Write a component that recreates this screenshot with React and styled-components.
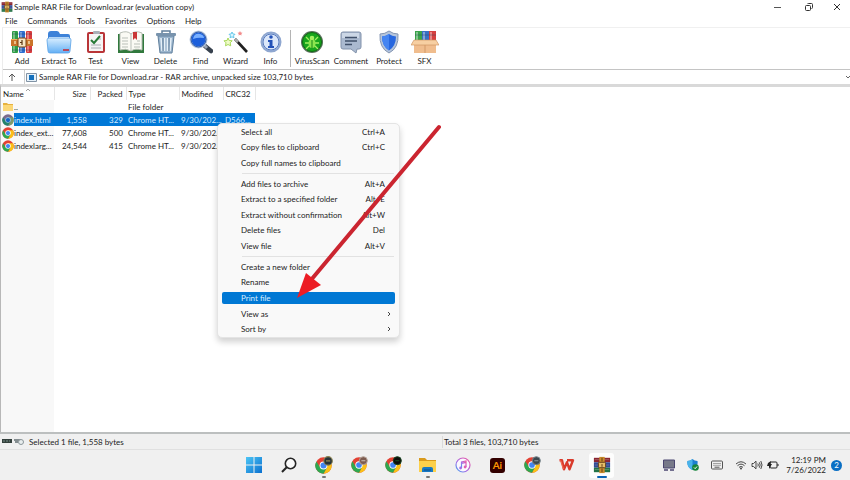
import React from "react";
import styled, { createGlobalStyle, css } from "styled-components";

const GlobalStyle = createGlobalStyle`
  * {
    box-sizing: border-box;
  }
  body {
    margin: 0;
    overflow: hidden;
  }
  body, button, select, table {
    font-family: Lato, "Open Sans", sans-serif;
    font-size: 8px;
    line-height: 12px;
    color: #1c1c1c;
  }
  button, select {
    border: 0;
    margin: 0;
    padding: 0;
    background: none;
  }
  svg {
    display: block;
    flex: none;
  }
`;

const Screen = styled.div`
  display: flex;
  flex-direction: column;
  min-height: 100vh;
  background: #fff;
`;

const TitleBar = styled.header`
  display: flex;
  align-items: center;
  height: 14px;
  padding-left: 1px;
`;

const Title = styled.h1`
  flex: 1;
  margin: 0 0 0 1px;
  font-size: 8px;
  font-weight: 400;
`;

const WindowButton = styled.button`
  display: flex;
  align-items: center;
  justify-content: center;
  width: 31px;
  height: 14px;
  &:last-child {
    width: 26px;
  }
`;

const MenuBar = styled.nav`
  display: flex;
  align-items: center;
  gap: 10px;
  height: 13px;
  padding-left: 5px;
`;

const ToolArea = styled.div`
  margin-left: 2px;
  border-top: 1px solid #f0f0f0;
  border-left: 1px solid #ececec;
`;

const ToolBar = styled.div`
  display: flex;
  height: 42px;
  padding-left: 1px;
  border-bottom: 1px solid #c4c4c4;
`;

const ToolButton = styled.button`
  display: flex;
  flex-direction: column;
  align-items: center;
  gap: 1px;
  width: ${(props) => props.$width || 35}px;
  padding-top: 2px;
  white-space: nowrap;
`;

const ToolDivider = styled.div`
  width: 1px;
  height: 37px;
  margin: 2px 2px 0;
  background: #b4b4b4;
`;

const AddressBar = styled.div`
  display: flex;
  align-items: center;
  height: 14px;
`;

const UpButton = styled.button`
  display: flex;
  align-items: center;
  justify-content: center;
  width: 18px;
  height: 14px;
`;

const AddressField = styled.label`
  display: flex;
  flex: 1;
  align-items: center;
  gap: 2px;
  height: 14px;
  margin-left: 3px;
  padding-left: 1px;
  border-left: 1px solid #cfcfcf;
`;

const AddressSelect = styled.select`
  flex: 1;
  appearance: none;
  height: 12px;
`;

const FileArea = styled.main`
  position: relative;
  flex: 1;
  border-top: 3px solid #d9d9d9;
  border-left: 1px solid #b8b8b8;
  background: linear-gradient(to right, #f8f8f8 53px, #fff 53px);
`;

const FileTable = styled.table`
  table-layout: fixed;
  width: 254px;
  border-collapse: collapse;
`;

const Col = styled.col`
  width: ${(props) => props.$width}px;
`;

const cell = css`
  padding: 0 3px 0 2px;
  font-weight: 400;
  text-align: ${(props) => (props.$right ? "right" : "left")};
  white-space: nowrap;
`;

const HeadCell = styled.th`
  ${cell}
  height: 13px;
  border-right: 1px solid #e6e6e6;
  background: #fff;
`;

const NameHead = styled.span`
  display: flex;
  align-items: flex-start;
  gap: 1px;
`;

const FileRow = styled.tr`
  color: ${(props) => (props.$selected ? "#d8ecff" : "inherit")};
  td {
    background: ${(props) => (props.$selected ? "#0078d7" : "transparent")};
  }
  td:first-child {
    padding: 0 0 0 1px;
    background: ${(props) =>
      props.$selected
        ? "linear-gradient(to right, #f8f8f8 13px, #0078d7 13px)"
        : "transparent"};
  }
`;

const Cell = styled.td`
  ${cell}
  height: 13px;
`;

const FileName = styled.span`
  display: flex;
  align-items: center;
`;

const ContextMenu = styled.div`
  position: absolute;
  top: 36px;
  left: 216px;
  display: grid;
  grid-template-rows:
    repeat(3, minmax(0, 1fr)) 5px
    repeat(5, minmax(0, 1fr)) 5px
    repeat(5, minmax(0, 1fr));
  width: 183px;
  height: 215px;
  padding: 0 4px;
  border: 1px solid #e4e4e4;
  border-radius: 5px;
  background: #f9f9f9;
  box-shadow: 0 4px 6px rgba(0, 0, 0, 0.18);
`;

const ContextItem = styled.button`
  display: flex;
  align-items: center;
  justify-content: space-between;
  padding: 0 ${(props) => (props.$submenu ? 4 : 10)}px 0 19px;
  border-radius: 2px;
  ${(props) =>
    props.$active &&
    css`
      margin: 2px 0;
      background: #0078d4;
      color: #d8ecff;
    `}
`;

const ContextDivider = styled.hr`
  width: 152px;
  height: 1px;
  margin: 2px 0 2px 20px;
  border: 0;
  background: #e2e2e2;
`;

const Arrow = styled.svg`
  position: absolute;
  top: 36px;
  left: 290px;
  pointer-events: none;
`;

const StatusBar = styled.footer`
  display: flex;
  align-items: center;
  height: 18px;
  border-top: 2px solid #bcbfbf;
  border-bottom: 1px solid #e0e0e0;
  background: #f0f0f0;
`;

const StatusCell = styled.div`
  display: flex;
  flex: ${(props) => props.$grow || 0} 1 0;
  align-items: center;
  gap: 4px;
  padding-left: 2px;
  & + & {
    padding-left: 1px;
    border-left: 1px solid #dadada;
  }
`;

const TaskBar = styled.div`
  display: flex;
  align-items: center;
  justify-content: flex-end;
  height: 30px;
  background: #f0f0f0;
`;

const Apps = styled.nav`
  display: grid;
  grid-template-columns: repeat(11, 1fr);
  justify-items: center;
  width: 382px;
  margin-right: 38px;
`;

const AppButton = styled.button`
  position: relative;
  display: flex;
  align-items: center;
  justify-content: center;
  width: 25px;
  height: 25px;
  border-radius: 3px;
  background: ${(props) => (props.$active ? "#fdfdfd" : "none")};
  &::after {
    content: "";
    position: absolute;
    bottom: 0;
    width: ${(props) => (props.$active ? 10 : props.$running ? 4 : 0)}px;
    height: 2px;
    border-radius: 1px;
    background: ${(props) => (props.$active ? "#0a63b5" : "#777")};
  }
`;

const Tray = styled.div`
  display: flex;
  align-items: center;
  padding-right: 8px;
`;

const TrayGroup = styled.button`
  display: flex;
  margin-left: 4px;
`;

const TrayIcon = styled.span`
  display: flex;
  justify-content: center;
  width: ${(props) => (props.$wide ? 24 : 16)}px;
`;

const Clock = styled.time`
  width: 45px;
  line-height: 10px;
  text-align: right;
`;

const Badge = styled.span`
  width: 11px;
  height: 11px;
  margin-left: 5px;
  border-radius: 50%;
  background: #0a6fc4;
  color: #fff;
  line-height: 11px;
  text-align: center;
`;

const RarIcon = ({ size = 24 }) => (
  <svg width={size} height={size} viewBox="0 0 24 24">
    <rect x="2" y="1" width="6" height="22" rx="1" fill="#2f9e46" />
    <rect x="9" y="1" width="6" height="22" rx="1" fill="#2f6fd0" />
    <rect x="16" y="1" width="6" height="22" rx="1" fill="#d93a3c" />
    <path d="M4 2v20M11 2v20M18 2v20" stroke="#fff" strokeOpacity=".45" strokeWidth="1.5" />
    <path d="M2 4h20M2 20h20" stroke="#17335c" strokeOpacity=".35" />
    <rect x="1" y="9" width="22" height="7" fill="#c9742a" />
    <path d="M1 9.5h22" stroke="#f2ae5a" />
    <rect x="8" y="8" width="8" height="9" rx="1" fill="#f6e6c4" stroke="#7a4313" />
    <path d="M12 10v5M10 12.5h2" stroke="#5b3512" strokeWidth="1.2" />
    <path d="M5 11v3M19 11v3" stroke="#fff3c9" strokeWidth="1.2" />
  </svg>
);

const BooksIcon = ({ size = 20 }) => (
  <svg width={size} height={size} viewBox="0 0 20 20">
    <path fill="#8b2431" d="M1 2h18v5H1z" />
    <path fill="#314a97" d="M1 7h18v6H1z" />
    <path fill="#227246" d="M1 13h18v5H1z" />
    <path d="M2 4h16M2 10h16M2 15h16" stroke="#c8c1b4" strokeOpacity=".35" />
    <path fill="#c98c2c" d="M7 1h6v18H7z" />
    <rect x="6" y="7" width="8" height="6" rx="1" fill="#e5bd68" stroke="#5b3512" />
    <path d="M10 2v4M10 9v3M10 14v4" stroke="#5b3512" />
  </svg>
);

const FolderIcon = () => (
  <svg width="26" height="24" viewBox="0 0 26 24">
    <defs>
      <linearGradient id="folder" x2="0" y2="1">
        <stop stopColor="#d9eeff" />
        <stop offset="1" stopColor="#63b0f5" />
      </linearGradient>
    </defs>
    <path d="M2 4q0-3 3-3h6q2 0 3 3h8q2 0 2 2v8H2z" fill="#3d82d8" />
    <path d="M3 7h20v3H3z" fill="#eef7ff" />
    <path d="M1 10q0-2 2-2h20q2 0 2 2l-1 11q0 2-2 2H4q-2 0-2-2z" fill="url(#folder)" stroke="#5aa2e6" strokeWidth=".8" />
    <path d="M17 19h6v2h-6z" fill="#b54a60" />
  </svg>
);

const TestIcon = () => (
  <svg width="22" height="24" viewBox="0 0 22 24">
    <rect x="2" y="2" width="18" height="21" rx="2" fill="#b93538" />
    <path d="M4 4h14v17H4z" fill="#f5f5f5" />
    <rect x="8" y="1" width="7" height="3" rx="1" fill="#aab0b7" />
    <path d="M6 15h10M6 18h10M12 9h4" stroke="#a9adb3" />
    <path d="M6 10l3 3 6-7" fill="none" stroke="#287b37" strokeWidth="2" />
  </svg>
);

const BookIcon = () => (
  <svg width="28" height="24" viewBox="0 0 28 24">
    <path d="M1 4h26v19H1z" fill="#31793d" />
    <path d="M3 3q7-3 11 1 4-4 11-1v17q-7-2-11 1-5-3-11-1z" fill="#fafaf4" stroke="#b8beb5" />
    <path d="M14 4v17M5 8h6M5 11h6M5 14h6M5 17h6M17 14h6M17 17h6M20 11h3" stroke="#b9bfb8" />
    <path d="M16 2h4v8l-2-2-2 2z" fill="#c93838" />
  </svg>
);

const TrashIcon = () => (
  <svg width="22" height="24" viewBox="0 0 22 24">
    <path d="M3 6h16l-2 17H5z" fill="#9cb6ce" stroke="#607f9c" />
    <path d="M6 8l1 13M9.5 8v13M12.5 8v13M16 8l-1 13" stroke="#e6f0f8" strokeWidth="1.5" />
    <path d="M8 8v13M14 8v13" stroke="#5f7d99" />
    <rect x="1" y="3" width="20" height="3" rx="1" fill="#7893ad" />
    <path d="M7 3V1h8v2" fill="none" stroke="#607f9c" strokeWidth="1.5" />
  </svg>
);

const FindIcon = () => (
  <svg width="24" height="24" viewBox="0 0 24 24">
    <path d="M16 16l6 5" stroke="#37414e" strokeWidth="4.5" strokeLinecap="round" />
    <path d="M15 15l3 3" stroke="#9aa5b4" strokeWidth="3" />
    <circle cx="9.5" cy="9.5" r="8" fill="#1c5fdb" stroke="#bccbe0" strokeWidth="2" />
    <path d="M4 9q1-6 7-5 4 1 4 4-6-1-11 1z" fill="#79b0ff" />
    <circle cx="9.5" cy="9.5" r="7.5" fill="none" stroke="#2856a8" />
  </svg>
);

const WizardIcon = () => (
  <svg width="26" height="24" viewBox="0 0 26 24">
    <path d="M12 9l12 13" stroke="#202020" strokeWidth="2.6" />
    <path d="M12 9l3 3" stroke="#aaa" strokeWidth="2.6" />
    <path d="M5 8l1.2 2.5 3 .3-2 2 .5 3L5 14.5l-2.5 1.3.5-3-2-2 3-.3z" fill="#effbc7" stroke="#a8d85b" />
    <path d="M9 2l1 2 2 .3-1.5 1.5.5 2-2-1-2 1 .5-2L6 4.3 8 4z" fill="#d9f6ff" stroke="#66c7ea" />
    <path d="M17 1l.8 1.5 1.7.2-1.2 1.2.3 1.6-1.6-.8-1.5.8.3-1.6-1.3-1.2 1.7-.2z" fill="#f28b8b" />
  </svg>
);

const InfoIcon = () => (
  <svg width="24" height="24" viewBox="0 0 24 24">
    <circle cx="12" cy="12" r="9.5" fill="#dbe7fa" stroke="#8fa7d0" strokeWidth="2" />
    <circle cx="12" cy="12" r="8" fill="none" stroke="#5579be" />
    <circle cx="12" cy="7" r="1.8" fill="#2352b8" />
    <path d="M9 10h4.5v6H15v2H9v-2h1.5v-4H9z" fill="#2352b8" />
  </svg>
);

const VirusIcon = () => (
  <svg width="24" height="24" viewBox="0 0 24 24">
    <circle cx="12" cy="12" r="11" fill="#58705a" />
    <circle cx="12" cy="12" r="9.5" fill="#17a51c" stroke="#0c6f11" />
    <path d="M6 7l3 3M18 7l-3 3M5 13h4M19 13h-4M6 19l3-3M18 19l-3-3" stroke="#a4ef62" strokeWidth="1.3" />
    <ellipse cx="12" cy="13.5" rx="3.5" ry="4.5" fill="#8ce64e" />
    <circle cx="12" cy="8" r="2.3" fill="#a4ef62" />
    <path d="M12 10v8" stroke="#17851a" />
  </svg>
);

const CommentIcon = () => (
  <svg width="24" height="24" viewBox="0 0 24 24">
    <path d="M4 2h16q2 0 2 2v13q0 2-2 2h-2l-1 4-5-4H4q-2 0-2-2V4q0-2 2-2z" fill="#aab9cf" stroke="#8292ab" />
    <path d="M3 3h17v5H3z" fill="#ccd7e6" />
    <path d="M6 7.5h12M6 11h12M6 14.5h7" stroke="#40506a" strokeWidth="1.5" />
  </svg>
);

const ShieldIcon = () => (
  <svg width="24" height="24" viewBox="0 0 24 24">
    <path d="M12 1q4 3 9 3 1 14-9 19Q2 18 3 4q5 0 9-3z" fill="#b5c5dc" stroke="#8495b2" />
    <path d="M12 4q3 2 7 2.5Q19 16 12 20.5 5 16 5 6.500 9 6 12 4z" fill="#2767df" />
    <path d="M12 4v16.5Q5 16 5 6.500 9 6 12 4z" fill="#4585f2" />
  </svg>
);

const SfxIcon = () => (
  <svg width="28" height="24" viewBox="0 0 28 24">
    <path d="M4 1h7v11H4z" fill="#39a34a" />
    <path d="M11 1h7v11h-7z" fill="#3770c4" />
    <path d="M18 1h7v11h-7z" fill="#d64040" />
    <path d="M6 2v9M13 2v9M20 2v9" stroke="#fff" strokeOpacity=".5" strokeWidth="1.5" />
    <path d="M4 5h21" stroke="#27415c" strokeOpacity=".4" />
    <path d="M3 10h22v13H3z" fill="#f0bd8e" />
    <path d="M3 10h22l3 5H0z" fill="#f7cfa2" stroke="#c98d5a" strokeWidth=".6" />
    <path d="M14 15v8" stroke="#d39a68" />
  </svg>
);

const ChromeIcon = ({ size = 17, badge, ring, tinted }) => (
  <svg width={size} height={size} viewBox="0 0 48 48" overflow="visible">
    <circle cx="24" cy="24" r="23" fill={tinted ? "#7a6a8c" : "#e34133"} />
    <path d="M24 13h20.300A23 23 0 0 1 24 47l9.500-17.500z" fill={tinted ? "#7f9a6a" : "#fbc116"} />
    <path d="M14.500 29.500L4 12.500A23 23 0 0 0 24 47l9.500-17.500z" fill={tinted ? "#23846a" : "#2da94f"} />
    <circle cx="24" cy="24" r="11" fill={tinted ? "#9cc8ee" : "#fff"} />
    <circle cx="24" cy="24" r="8.5" fill={tinted ? "#1464c4" : "#4285f4"} />
    {badge && <circle cx="37" cy="11" r="12" fill={badge} stroke={ring} strokeWidth="3" />}
    {badge && <path d="M31 11h12" stroke={ring} strokeWidth="4" />}
  </svg>
);

const SmallFolder = () => (
  <svg width="12" height="11" viewBox="0 0 12 11">
    <path d="M1 2h4l1 1h5v7H1z" fill="#e7b23f" />
    <path d="M1 4h10v6H1z" fill="#fbd776" />
  </svg>
);

const WindowsIcon = () => (
  <svg width="16" height="16" viewBox="0 0 16 16">
    <defs>
      <linearGradient id="win" x2="1" y2="1">
        <stop stopColor="#4cc5f5" />
        <stop offset="1" stopColor="#0a70cf" />
      </linearGradient>
    </defs>
    <path d="M0 0h7.500v7.500H0zM8.500 0H16v7.500H8.500zM0 8.500h7.500V16H0zM8.500 8.500H16V16H8.500z" fill="url(#win)" />
  </svg>
);

const SearchIcon = () => (
  <svg width="16" height="16" viewBox="0 0 16 16" fill="none" stroke="#252525" strokeWidth="1.6">
    <circle cx="9.5" cy="6.5" r="5.2" fill="#fafafa" />
    <path d="M5.700 10.200L1 15" strokeWidth="2" />
  </svg>
);

const ExplorerIcon = () => (
  <svg width="17" height="16" viewBox="0 0 17 16">
    <path d="M0 1h6l2 2h9v5H0z" fill="#d99a1c" />
    <path d="M0 4h17v11H0z" fill="#fcd04b" />
    <path d="M3 15v-3q0-2 2-2h7q2 0 2 2v3z" fill="#1779c4" />
    <path d="M5 13h7" stroke="#0c4f8c" />
  </svg>
);

const MusicIcon = () => (
  <svg width="16" height="16" viewBox="0 0 16 16">
    <defs>
      <linearGradient id="music" x1="1" x2="0" y2="1">
        <stop stopColor="#f0569f" />
        <stop offset=".6" stopColor="#a46be6" />
        <stop offset="1" stopColor="#3fa9f0" />
      </linearGradient>
    </defs>
    <circle cx="8" cy="8" r="7" fill="#fbf8fe" stroke="url(#music)" strokeWidth="1.2" />
    <path d="M6.500 11V5l4.500-1v6M6.500 6.300L11 5.300" fill="none" stroke="url(#music)" strokeWidth="1.2" />
    <circle cx="5.6" cy="11" r="1.4" fill="#a46be6" />
    <circle cx="10.1" cy="10" r="1.4" fill="#e060b0" />
  </svg>
);

const AiTile = styled.span`
  width: 15px;
  height: 15px;
  border-radius: 3px;
  background: #330000;
  color: #ff9a00;
  font-size: 10px;
  font-weight: 700;
  line-height: 14px;
  text-align: center;
`;

const WpsIcon = () => (
  <svg width="17" height="14" viewBox="0 0 17 14" fill="none" strokeWidth="2.4" strokeLinejoin="round">
    <path d="M1.500 2.300H4l2 9 3-7 2.500 7 3.500-9H9" stroke="#d93a2b" />
    <path d="M2.500 2.300l3 9" stroke="#f0654c" strokeWidth="1.2" />
  </svg>
);

const DesktopIcon = () => (
  <svg width="12" height="12" viewBox="0 0 12 12">
    <path d="M.5 1h11v8H.5z" fill="#777989" stroke="#4b4670" />
    <path d="M1 11h4M7 11h4" stroke="#4b4670" strokeWidth="1.5" />
  </svg>
);

const DefenderIcon = () => (
  <svg width="12" height="12" viewBox="0 0 12 12">
    <path d="M5.500 0q2 2 5 2 1 6-5 9-6-3-5-9 3 0 5-2z" fill="#1c7fd0" />
    <path d="M5.500 0v11q-6-3-5-9 3 0 5-2z" fill="#49b3ea" />
    <circle cx="8.5" cy="8.5" r="3.3" fill="#16853a" />
    <path d="M7 8.500l1.200 1.200L10 7.500" stroke="#fff" fill="none" />
  </svg>
);

const KeyboardIcon = () => (
  <svg width="12" height="10" viewBox="0 0 12 10" fill="none" stroke="#555">
    <rect x=".5" y="1" width="11" height="8" rx="1" />
    <path d="M2.500 3.500h7M2.500 5.300h7" strokeDasharray="1 1" />
    <path d="M3.500 7.200h5" />
  </svg>
);

const WifiIcon = () => (
  <svg width="12" height="10" viewBox="0 0 12 10" fill="none" stroke="#333" strokeWidth=".9">
    <path d="M1 4q5-4.500 10 0M2.500 5.700q3.500-3.200 7 0M4 7.300q2-1.700 4 0" />
    <circle cx="6" cy="8.5" r=".9" fill="#333" stroke="none" />
  </svg>
);

const SoundIcon = () => (
  <svg width="12" height="10" viewBox="0 0 12 10" fill="none" stroke="#333" strokeWidth=".9">
    <path d="M1 3.500h1.500L5 1.200v7.600L2.500 6.500H1zM6.800 3.500q1 1.500 0 3M8.300 2.300q1.800 2.700 0 5.400M9.800 1q2.500 4 0 8" />
  </svg>
);

const BatteryIcon = () => (
  <svg width="12" height="10" viewBox="0 0 12 10">
    <rect x="3" y="2" width="7" height="6" rx="1" fill="none" stroke="#222" />
    <path d="M10.500 4h1v2h-1zM1 3l3-2-.5 3H5L2 9V6H0z" fill="#222" />
  </svg>
);

const AddressIcon = () => (
  <svg width="11" height="9" viewBox="0 0 11 9">
    <path d="M.5.5h10v8H.5z" fill="#e7f2fa" stroke="#8193a5" />
    <path d="M3 2h5v5H3z" fill="#1671bd" />
  </svg>
);

const StatusIcons = () => (
  <svg width="23" height="8" viewBox="0 0 23 8">
    <path d="M0 1h10v4H0z" fill="#33403c" />
    <path d="M1 3h7" stroke="#7b908a" strokeDasharray="2 1" />
    <path d="M12 2h7M13 4h3" stroke="#848d90" strokeWidth="2" />
    <circle cx="19" cy="4" r="2.5" fill="#e9eeee" stroke="#8b9699" />
  </svg>
);

const menus = ["File", "Commands", "Tools", "Favorites", "Options", "Help"];

const tools = [
  { label: "Add", icon: RarIcon, width: 36 },
  { label: "Extract To", icon: FolderIcon, width: 38 },
  { label: "Test", icon: TestIcon },
  { label: "View", icon: BookIcon },
  { label: "Delete", icon: TrashIcon },
  { label: "Find", icon: FindIcon },
  { label: "Wizard", icon: WizardIcon },
  { label: "Info", icon: InfoIcon },
];

const extraTools = [
  { label: "VirusScan", icon: VirusIcon, width: 38 },
  { label: "Comment", icon: CommentIcon, width: 40 },
  { label: "Protect", icon: ShieldIcon, width: 36 },
  { label: "SFX", icon: SfxIcon },
];

const files = [
  { name: "index.html", size: "1,558", packed: "329", crc: "D566...", selected: true },
  { name: "index_ext...", size: "77,608", packed: "500" },
  { name: "indexlarg...", size: "24,544", packed: "415" },
];

const contextGroups = [
  [
    { label: "Select all", keys: "Ctrl+A" },
    { label: "Copy files to clipboard", keys: "Ctrl+C" },
    { label: "Copy full names to clipboard" },
  ],
  [
    { label: "Add files to archive", keys: "Alt+A" },
    { label: "Extract to a specified folder", keys: "Alt+E" },
    { label: "Extract without confirmation", keys: "Alt+W" },
    { label: "Delete files", keys: "Del" },
    { label: "View file", keys: "Alt+V" },
  ],
  [
    { label: "Create a new folder" },
    { label: "Rename" },
    { label: "Print file", active: true },
    { label: "View as", submenu: true },
    { label: "Sort by", submenu: true },
  ],
];

const apps = [
  { label: "Start", icon: <WindowsIcon /> },
  { label: "Search", icon: <SearchIcon /> },
  { label: "Chrome, profile 1", icon: <ChromeIcon badge="#27343b" ring="#8a8352" />, running: true },
  { label: "Chrome, profile 2", icon: <ChromeIcon size={16} badge="#7d5c50" ring="#b9a79c" /> },
  { label: "Chrome, profile 3", icon: <ChromeIcon size={16} badge="#0b0b0b" ring="#14401c" /> },
  { label: "File Explorer", icon: <ExplorerIcon />, running: true },
  { label: "iTunes", icon: <MusicIcon /> },
  { label: "Illustrator", icon: <AiTile>Ai</AiTile> },
  { label: "Chrome, profile 4", icon: <ChromeIcon size={16} badge="#3c4850" ring="#77858c" /> },
  { label: "WPS Office", icon: <WpsIcon /> },
  { label: "WinRAR", icon: <BooksIcon size={18} />, active: true },
];

const ToolItem = ({ label, icon: Icon, width }) => (
  <ToolButton $width={width}>
    <Icon />
    {label}
  </ToolButton>
);

const Files = () => (
  <FileTable>
    <colgroup>
      <Col $width={53} />
      <Col $width={36} />
      <Col $width={36} />
      <Col $width={53} />
      <Col $width={44} />
      <Col $width={32} />
    </colgroup>
    <thead>
      <tr>
        <HeadCell>
          <NameHead>
            Name
            <svg width="6" height="4" viewBox="0 0 6 4">
              <path d="M1 3l2-2 2 2" fill="none" stroke="#888" strokeWidth=".8" />
            </svg>
          </NameHead>
        </HeadCell>
        <HeadCell $right>Size</HeadCell>
        <HeadCell $right>Packed</HeadCell>
        <HeadCell>Type</HeadCell>
        <HeadCell>Modified</HeadCell>
        <HeadCell>CRC32</HeadCell>
      </tr>
    </thead>
    <tbody>
      <FileRow>
        <Cell>
          <FileName>
            <SmallFolder />
            ..
          </FileName>
        </Cell>
        <Cell />
        <Cell />
        <Cell>File folder</Cell>
        <Cell />
        <Cell />
      </FileRow>
      {files.map((file) => (
        <FileRow key={file.name} $selected={file.selected}>
          <Cell>
            <FileName>
              <ChromeIcon size={12} tinted={file.selected} />
              {file.name}
            </FileName>
          </Cell>
          <Cell $right>{file.size}</Cell>
          <Cell $right>{file.packed}</Cell>
          <Cell>Chrome HT...</Cell>
          <Cell>9/30/202...</Cell>
          <Cell>{file.crc}</Cell>
        </FileRow>
      ))}
    </tbody>
  </FileTable>
);

const FileContextMenu = () => (
  <ContextMenu role="menu">
    {contextGroups.map((group, index) => (
      <React.Fragment key={group[0].label}>
        {index > 0 && <ContextDivider />}
        {group.map((item) => (
          <ContextItem
            key={item.label}
            role="menuitem"
            $active={item.active}
            $submenu={item.submenu}
          >
            {item.label}
            {item.keys && <span>{item.keys}</span>}
            {item.submenu && (
              <svg width="4" height="6" viewBox="0 0 4 6">
                <path d="M1 1l2 2-2 2" fill="none" stroke="#444" />
              </svg>
            )}
          </ContextItem>
        ))}
      </React.Fragment>
    ))}
  </ContextMenu>
);

const App = () => (
  <>
    <GlobalStyle />
    <Screen>
      <TitleBar>
        <BooksIcon size={12} />
        <Title>Sample RAR File for Download.rar (evaluation copy)</Title>
        <WindowButton aria-label="Minimize">
          <svg width="8" height="8" viewBox="0 0 8 8" stroke="#555">
            <path d="M0 4.500h7" />
          </svg>
        </WindowButton>
        <WindowButton aria-label="Restore">
          <svg width="8" height="8" viewBox="0 0 8 8" fill="none" stroke="#333">
            <rect x=".5" y="2.5" width="5" height="5" rx="1" />
            <path d="M2.500 1q0-.5 1-.5h3q1 0 1 1v3q0 1-1 1" />
          </svg>
        </WindowButton>
        <WindowButton aria-label="Close">
          <svg width="8" height="8" viewBox="0 0 8 8" stroke="#333">
            <path d="M1 1l6 6M7 1L1 7" />
          </svg>
        </WindowButton>
      </TitleBar>
      <MenuBar>
        {menus.map((label) => (
          <button key={label}>{label}</button>
        ))}
      </MenuBar>
      <ToolArea>
        <ToolBar>
          {tools.map((tool) => (
            <ToolItem key={tool.label} {...tool} />
          ))}
          <ToolDivider />
          {extraTools.map((tool) => (
            <ToolItem key={tool.label} {...tool} />
          ))}
        </ToolBar>
        <AddressBar>
          <UpButton aria-label="Up one level">
            <svg width="8" height="9" viewBox="0 0 8 9" fill="none" stroke="#555">
              <path d="M4 8V1M1 4l3-3 3 3" />
            </svg>
          </UpButton>
          <AddressField>
            <AddressIcon />
            <AddressSelect aria-label="Address">
              <option>
                Sample RAR File for Download.rar - RAR archive, unpacked size 103,710 bytes
              </option>
            </AddressSelect>
            <svg width="4" height="4" viewBox="0 0 4 4">
              <path d="M0 1l2 2 2-2" fill="none" stroke="#666" />
            </svg>
          </AddressField>
        </AddressBar>
      </ToolArea>
      <FileArea>
        <Files />
        <FileContextMenu />
        <Arrow width="155" height="180" viewBox="0 0 155 180">
          <path d="M148 4L20 157" stroke="#cb2530" strokeWidth="4" strokeLinecap="round" />
          <path d="M6 175l9-25 15 12z" fill="#ec1c24" />
        </Arrow>
      </FileArea>
      <StatusBar>
        <StatusCell $grow={442}>
          <StatusIcons />
          Selected 1 file, 1,558 bytes
        </StatusCell>
        <StatusCell $grow={408}>Total 3 files, 103,710 bytes</StatusCell>
      </StatusBar>
      <TaskBar>
        <Apps>
          {apps.map((app) => (
            <AppButton
              key={app.label}
              aria-label={app.label}
              $active={app.active}
              $running={app.running}
            >
              {app.icon}
            </AppButton>
          ))}
        </Apps>
        <Tray>
          <TrayIcon $wide>
            <DesktopIcon />
          </TrayIcon>
          <TrayIcon $wide>
            <DefenderIcon />
          </TrayIcon>
          <TrayIcon $wide>
            <KeyboardIcon />
          </TrayIcon>
          <TrayGroup aria-label="Network, volume, battery">
            <TrayIcon>
              <WifiIcon />
            </TrayIcon>
            <TrayIcon>
              <SoundIcon />
            </TrayIcon>
            <TrayIcon>
              <BatteryIcon />
            </TrayIcon>
          </TrayGroup>
          <Clock>
            12:19 PM
            <br />
            7/26/2022
          </Clock>
          <Badge>2</Badge>
        </Tray>
      </TaskBar>
    </Screen>
  </>
);

export default App;
